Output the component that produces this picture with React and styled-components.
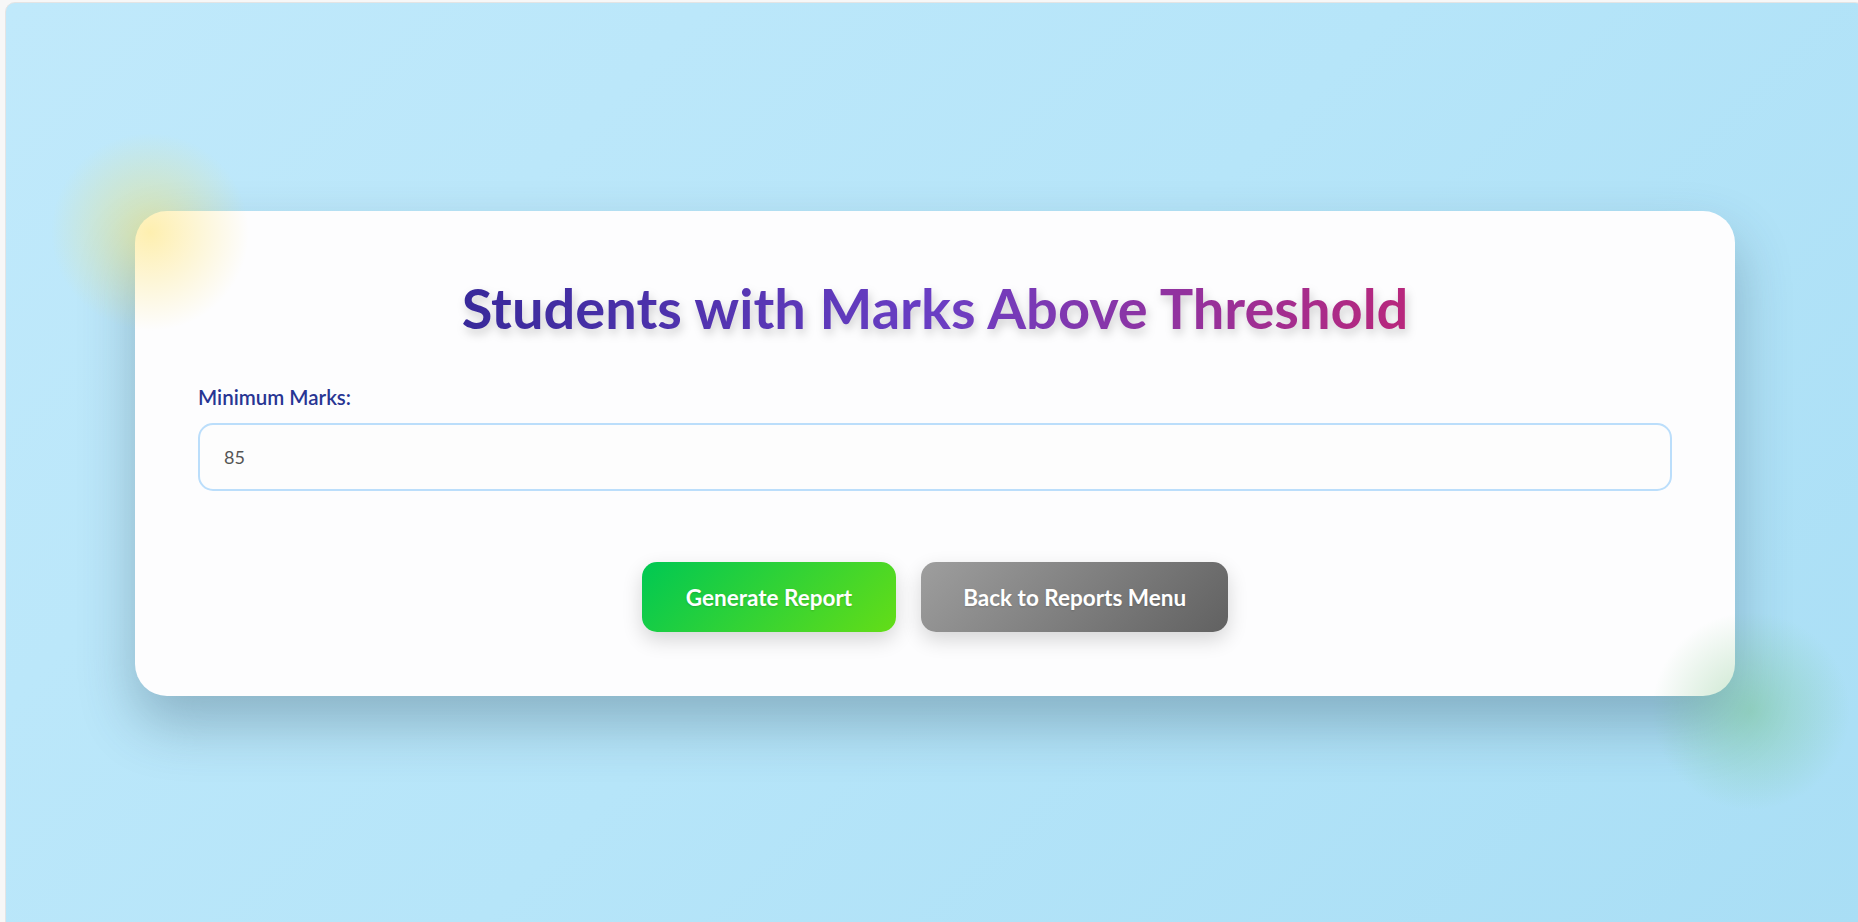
import React from "react";
import styled, { createGlobalStyle } from "styled-components";

const GlobalStyle = createGlobalStyle`
  html, body {
    margin: 0;
    padding: 0;
    overflow: hidden;
    background: #f7f7f7;
  }
  * { box-sizing: border-box; }
`;

const Frame = styled.div`
  margin: 2px 0 0 5px;
  width: 1860px;
  height: 930px;
  border: 1px solid #e4e4e4;
  border-radius: 10px;
  background: linear-gradient(135deg, #c0e9fb 0%, #b6e5f9 50%, #a9def5 100%);
  display: flex;
  justify-content: center;
  padding-top: 208px;
  font-family: "Lato", "Noto Sans", sans-serif;
`;

const Card = styled.div`
  position: relative;
  width: 1600px;
  height: 485px;
  background: #fdfdfe;
  border-radius: 32px;
  padding: 64px 63px;
  box-shadow: 0 28px 55px rgba(40, 70, 90, 0.32);
`;

const Glow = styled.div`
  position: absolute;
  width: ${(p) => p.$size}px;
  height: ${(p) => p.$size}px;
  left: ${(p) => p.$x}px;
  top: ${(p) => p.$y}px;
  border-radius: 50%;
  background: radial-gradient(circle, ${(p) => p.$color} 0%, transparent 70%);
  pointer-events: none;
`;

const Title = styled.h1`
  margin: 0 0 44px;
  text-align: center;
  font-size: 56px;
  font-weight: 700;
  line-height: 66px;
`;

const GradientText = styled.span`
  display: inline-block;
  background: linear-gradient(90deg, #38299a 0%, #6a3ec4 50%, #b8277c 100%);
  -webkit-background-clip: text;
  background-clip: text;
  -webkit-text-fill-color: transparent;
  color: transparent;
  filter: drop-shadow(2px 5px 5px rgba(0, 0, 0, 0.18));
`;

const Label = styled.label`
  display: block;
  font-size: 20.5px;
  font-weight: 600;
  line-height: 24px;
  color: #283593;
  margin-bottom: 14px;
`;

const Input = styled.input`
  display: block;
  width: 100%;
  height: 68px;
  padding: 0 24px;
  border: 2px solid #bbdefb;
  border-radius: 15px;
  background: #fdfdfd;
  font-family: inherit;
  font-size: 18px;
  color: #555;
  outline: none;
`;

const Actions = styled.div`
  display: flex;
  justify-content: center;
  gap: 25px;
  margin-top: 71px;
`;

const Button = styled.button`
  height: 70px;
  padding: 0 ${(p) => (p.$variant === "secondary" ? 42 : 44)}px;
  border: none;
  border-radius: 15px;
  font-family: inherit;
  font-size: 22.5px;
  font-weight: 700;
  color: #fff;
  text-shadow: 0 1px 2px rgba(0, 0, 0, 0.15);
  background: ${(p) =>
    p.$variant === "secondary"
      ? "linear-gradient(135deg, #9e9e9e 0%, #616161 100%)"
      : "linear-gradient(135deg, #00c853 0%, #64dd17 100%)"};
  box-shadow: 0 8px 20px rgba(0, 0, 0, 0.16);
  cursor: pointer;
`;

export default function App() {
  return (
    <>
      <GlobalStyle />
      <Frame>
        <Card>
          <Glow $size={200} $x={-85} $y={-79} $color="rgba(255, 222, 80, 0.45)" />
          <Glow $size={200} $x={1516} $y={400} $color="rgba(110, 190, 120, 0.4)" />
          <Title>
            <GradientText>Students with Marks Above Threshold</GradientText>
          </Title>
          <Label htmlFor="min">Minimum Marks:</Label>
          <Input id="min" type="number" defaultValue="85" />
          <Actions>
            <Button>Generate Report</Button>
            <Button $variant="secondary">Back to Reports Menu</Button>
          </Actions>
        </Card>
      </Frame>
    </>
  );
}
